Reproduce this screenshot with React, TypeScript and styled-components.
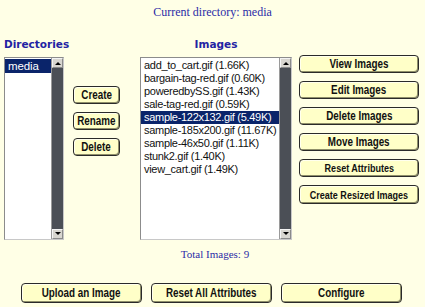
import React from 'react';
import styled, { createGlobalStyle } from 'styled-components';

const GlobalStyle = createGlobalStyle`
  html, body {
    margin: 0;
    padding: 0;
    background: #ffffe6;
  }
`;

const directories = ['media'];

const images = [
  'add_to_cart.gif (1.66K)',
  'bargain-tag-red.gif (0.60K)',
  'poweredbySS.gif (1.43K)',
  'sale-tag-red.gif (0.59K)',
  'sample-122x132.gif (5.49K)',
  'sample-185x200.gif (11.67K)',
  'sample-46x50.gif (1.11K)',
  'stunk2.gif (1.40K)',
  'view_cart.gif (1.49K)',
];

const Page = styled.div`
  width: 425px;
  height: 307px;
  overflow: hidden;
  background: #ffffe6;
`;

const Caption = styled.div<{ $size: number }>`
  text-align: center;
  font-family: 'Liberation Serif', 'Times New Roman', serif;
  font-size: ${(p) => p.$size}px;
  color: #2b2ba6;
`;

const Header = styled(Caption)`
  padding-top: 5px;
  height: 38px;
  box-sizing: border-box;
`;

const Main = styled.div`
  display: flex;
  padding-left: 4px;
`;

const Column = styled.div<{ $width: number; $gap?: number }>`
  display: flex;
  flex-direction: column;
  width: ${(p) => p.$width}px;
  margin-left: ${(p) => p.$gap || 0}px;
`;

const Title = styled.div<{ $align?: string }>`
  height: 19px;
  line-height: 13px;
  font-family: 'DejaVu Sans', Verdana, sans-serif;
  font-size: 10.5px;
  font-weight: bold;
  color: #2323a3;
  text-align: ${(p) => p.$align || 'left'};
`;

const ListBox = styled.div`
  display: flex;
  height: 183px;
  border: 1px solid #8c8c8c;
  border-right-color: #c8c8c8;
  border-bottom-color: #c8c8c8;
  background: #fff;
  box-sizing: border-box;
`;

const ListItems = styled.div`
  flex: 1;
  min-width: 0;
  padding-top: 1px;
`;

const Item = styled.div<{ $selected?: boolean }>`
  height: 13px;
  line-height: 13px;
  padding-left: 3px;
  white-space: nowrap;
  font-family: 'Liberation Sans', Arial, sans-serif;
  font-size: 11px;
  letter-spacing: -0.3px;
  color: ${(p) => (p.$selected ? '#fff' : '#111')};
  background: ${(p) => (p.$selected ? '#0a246a' : 'transparent')};
`;

const DirItem = styled(Item)`
  height: 14px;
  line-height: 14px;
  font-size: 11.5px;
  letter-spacing: -0.1px;
`;

const ScrollTrack = styled.div`
  width: 11px;
  display: flex;
  flex-direction: column;
  justify-content: space-between;
  background: #4b4f56;
  border-left: 1px solid #9a9a9a;
`;

const ArrowBox = styled.div`
  height: 10px;
  background: #d8d6d0;
  border: 1px solid #8a8a8a;
  border-top-color: #f4f4f4;
  border-left-color: #f4f4f4;
  box-sizing: border-box;
  display: flex;
  align-items: center;
  justify-content: center;
`;

const ButtonStack = styled.div<{ $top: number; $gap: number }>`
  display: flex;
  flex-direction: column;
  gap: ${(p) => p.$gap}px;
  padding-top: ${(p) => p.$top}px;
`;

const Button = styled.button<{ $size?: number; $height?: number; $width?: number }>`
  height: ${(p) => p.$height || 18}px;
  width: ${(p) => (p.$width ? `${p.$width}px` : '100%')};
  flex-shrink: 0;
  padding: 0;
  margin: 0;
  display: flex;
  align-items: center;
  justify-content: center;
  overflow: hidden;
  background: #ffffc8;
  border: 1px solid #2a2a2a;
  border-radius: 4px;
  box-shadow: inset -1px -1px 0 #8f8f6a, inset 1px 1px 0 #ffffee;
  font-family: 'Liberation Sans', Arial, sans-serif;
  font-weight: bold;
  font-size: ${(p) => p.$size || 12}px;
  color: #111;
  cursor: pointer;
`;

/* the original uses a condensed face; squeeze Liberation Sans to match */
const Label = styled.span`
  display: inline-block;
  white-space: nowrap;
  transform: scaleX(0.82);
`;

const Footer = styled.div`
  display: flex;
  flex-direction: column;
`;

const Total = styled(Caption)`
  margin-top: 8px;
  padding-left: 5px;
`;

const BottomBar = styled.div`
  display: flex;
  gap: 9px;
  margin-top: 23px;
  padding-left: 21px;
`;

function Arrow({ up }: { up?: boolean }) {
  return (
    <ArrowBox>
      <svg width="6" height="4" viewBox="0 0 6 4">
        <path d={up ? 'M0 4 L3 1 L6 4 Z' : 'M0 0 L3 3 L6 0 Z'} fill="#000" />
      </svg>
    </ArrowBox>
  );
}

function Scrollbar() {
  return (
    <ScrollTrack>
      <Arrow up />
      <Arrow />
    </ScrollTrack>
  );
}

function Btn({ children, size, height, width }: { children: string; size?: number; height?: number; width?: number }) {
  return (
    <Button $size={size} $height={height} $width={width}>
      <Label>{children}</Label>
    </Button>
  );
}

export default function App() {
  return (
    <Page>
      <GlobalStyle />
      <Header $size={12}>Current directory: media</Header>
      <Main>
        <Column $width={60}>
          <Title>Directories</Title>
          <ListBox>
            <ListItems>
              {directories.map((d) => (
                <DirItem key={d} $selected>
                  {d}
                </DirItem>
              ))}
            </ListItems>
            <Scrollbar />
          </ListBox>
        </Column>
        <Column $width={47} $gap={9}>
          <ButtonStack $top={48} $gap={8}>
            <Btn>Create</Btn>
            <Btn>Rename</Btn>
            <Btn>Delete</Btn>
          </ButtonStack>
        </Column>
        <Column $width={152} $gap={20}>
          <Title $align="center">Images</Title>
          <ListBox>
            <ListItems>
              {images.map((img) => (
                <Item key={img} $selected={img.startsWith('sample-122')}>
                  {img}
                </Item>
              ))}
            </ListItems>
            <Scrollbar />
          </ListBox>
        </Column>
        <Column $width={120} $gap={7}>
          <ButtonStack $top={17} $gap={8}>
            <Btn>View Images</Btn>
            <Btn>Edit Images</Btn>
            <Btn>Delete Images</Btn>
            <Btn>Move Images</Btn>
            <Btn size={11}>Reset Attributes</Btn>
            <Btn size={11} height={19}>Create Resized Images</Btn>
          </ButtonStack>
        </Column>
      </Main>
      <Footer>
        <Total $size={11}>Total Images: 9</Total>
        <BottomBar>
          <Btn width={121} height={20}>Upload an Image</Btn>
          <Btn width={121} height={20}>Reset All Attributes</Btn>
          <Btn width={121} height={20}>Configure</Btn>
        </BottomBar>
      </Footer>
    </Page>
  );
}
